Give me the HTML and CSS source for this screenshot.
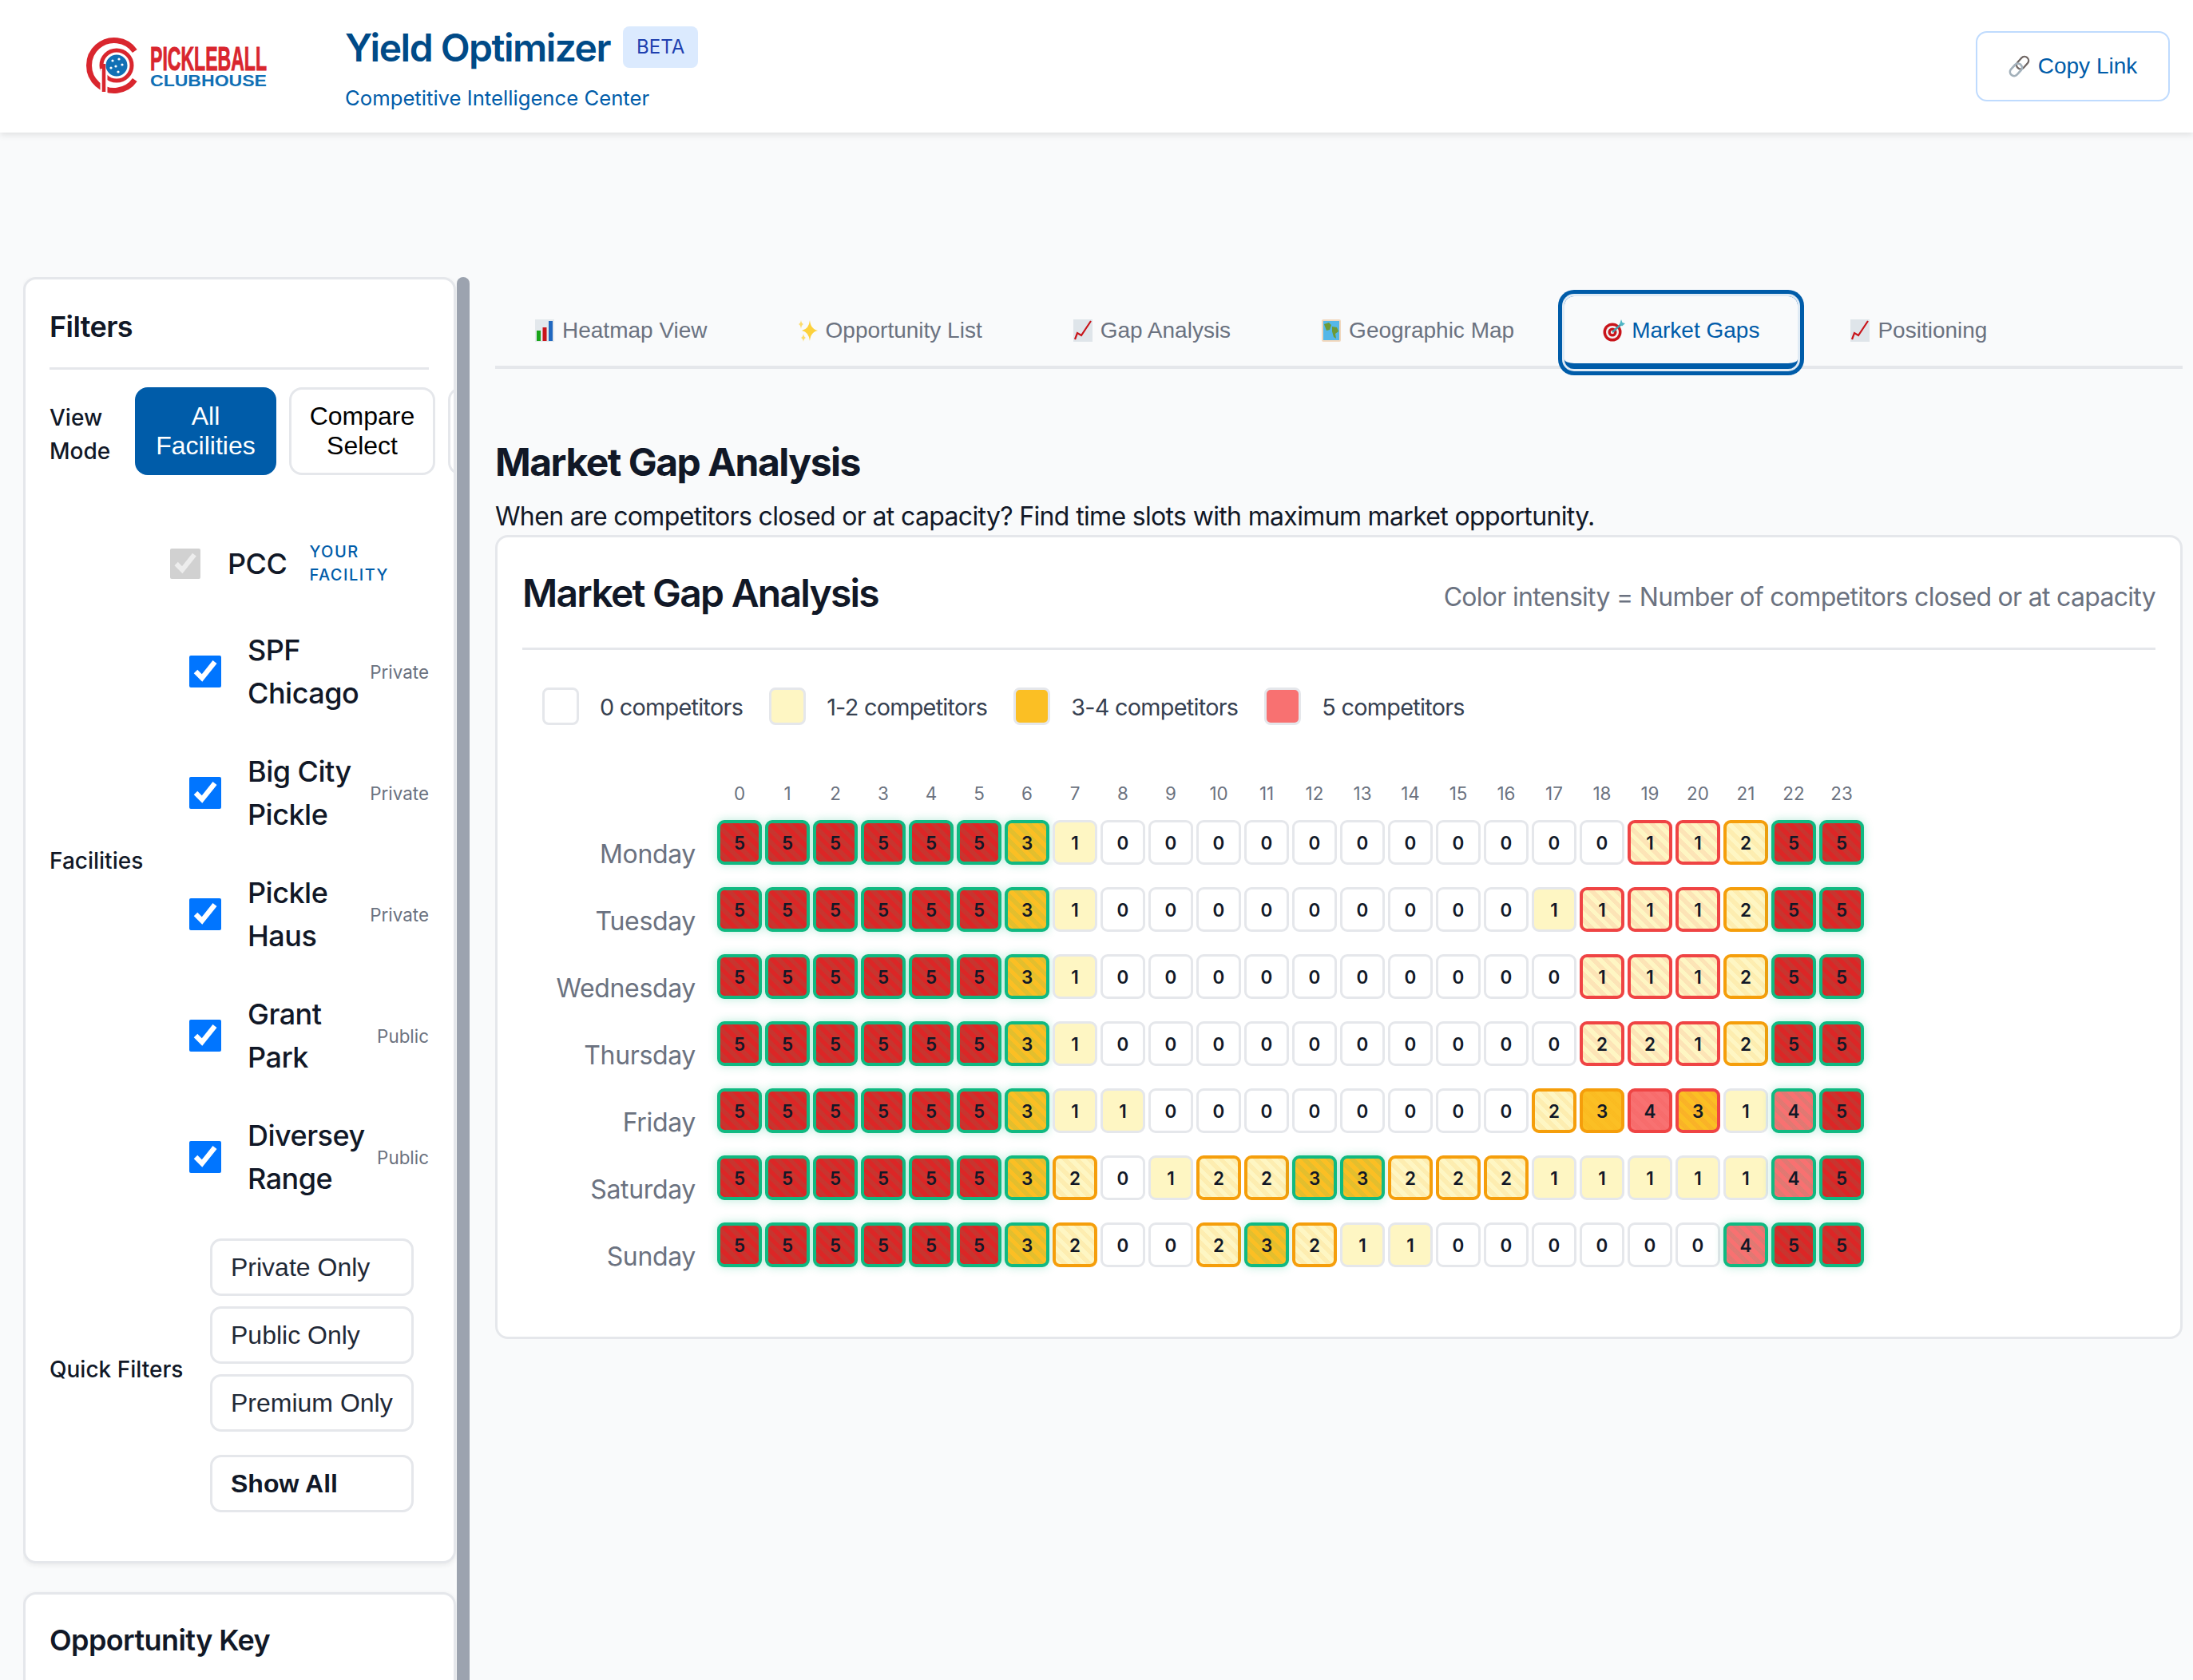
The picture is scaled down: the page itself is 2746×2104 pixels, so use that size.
FILE: index.html
```html
<!DOCTYPE html>
<html lang="en">
<head>
<meta charset="utf-8">
<title>Yield Optimizer</title>
<link rel="stylesheet" href="styles.css">
</head>
<body>
<header class="top">
  <svg class="logo" viewBox="0 0 270 100" width="270" height="100" aria-label="Pickleball Clubhouse">
    <g transform="translate(1 -3)">
      <path d="M77.8 33.9A31.5 31.5 0 1 0 77.8 70.1" fill="none" stroke="#d9262e" stroke-width="7"/>
      <circle cx="55" cy="52" r="19" fill="none" stroke="#d9262e" stroke-width="5"/>
      <path d="M39 56V90" stroke="#fff" stroke-width="9"/>
      <path d="M39 50V85" stroke="#d9262e" stroke-width="4.5"/>
      <circle cx="55" cy="52" r="13.5" fill="#1170b5"/>
      <g fill="#fff"><circle cx="50" cy="46" r="1.6"/><circle cx="58" cy="44" r="1.6"/><circle cx="62" cy="51" r="1.6"/><circle cx="54" cy="53" r="1.6"/><circle cx="48" cy="55" r="1.6"/><circle cx="57" cy="60" r="1.6"/></g>
    </g>
    <text class="logo-a" x="98" y="55" textLength="146" lengthAdjust="spacingAndGlyphs">PICKLEBALL</text>
    <text class="logo-b" x="98" y="75" textLength="146" lengthAdjust="spacingAndGlyphs">CLUBHOUSE</text>
  </svg>
  <div class="brand">
    <div class="brand-line">
      <h1 class="brand-title">Yield Optimizer</h1>
      <span class="beta">BETA</span>
    </div>
    <p class="brand-sub">Competitive Intelligence Center</p>
  </div>
  <button class="copy">
    <svg class="ico-link" viewBox="0 0 28 28" width="27" height="28"><g fill="none"><rect x="13" y="0.5" width="10.500" height="18" rx="5.200" transform="rotate(42 18.250 9.500)" stroke="#6f6663" stroke-width="2.400"/><rect x="4.500" y="9.500" width="10.500" height="18" rx="5.200" transform="rotate(42 9.750 18.500)" stroke="#a3b1bb" stroke-width="2.800"/></g></svg>
    Copy Link
  </button>
</header>

<div class="layout">
  <aside class="side">
    <span class="thumb"></span>
    <section class="card filters">
      <h2 class="card-title">Filters</h2>
      <div class="mode">
        <span class="lab mode-lab">View Mode</span>
        <button class="mode-btn on">All Facilities</button>
        <button class="mode-btn">Compare Select</button>
        <button class="mode-btn stub"></button>
      </div>
      <div class="fac">
        <span class="lab">Facilities</span>
        <div class="fac-list">
          <label class="row own"><input type="checkbox" checked disabled><span class="name">PCC</span><span class="own-tag">YOUR FACILITY</span></label>
          <label class="row"><input type="checkbox" checked><span class="name">SPF<br>Chicago</span><span class="tag">Private</span></label>
          <label class="row"><input type="checkbox" checked><span class="name">Big City<br>Pickle</span><span class="tag">Private</span></label>
          <label class="row"><input type="checkbox" checked><span class="name">Pickle<br>Haus</span><span class="tag">Private</span></label>
          <label class="row"><input type="checkbox" checked><span class="name">Grant<br>Park</span><span class="tag">Public</span></label>
          <label class="row"><input type="checkbox" checked><span class="name">Diversey<br>Range</span><span class="tag">Public</span></label>
        </div>
      </div>
      <div class="quick">
        <span class="lab">Quick Filters</span>
        <div class="quick-list">
          <button class="q">Private Only</button>
          <button class="q">Public Only</button>
          <button class="q">Premium Only</button>
          <button class="q all">Show All</button>
        </div>
      </div>
    </section>
    <section class="card key">
      <h2 class="card-title">Opportunity Key</h2>
    </section>
  </aside>

  <main class="main">
    <nav class="tabs">
      <button class="tab">
        <svg class="ico" viewBox="0 0 24 28" width="24" height="28"><rect x="0" y="0" width="24" height="28" fill="#e3e8ec"/><rect x="2" y="14" width="5" height="13" fill="#1aa51a"/><rect x="9.500" y="10" width="5" height="17" fill="#c8141a"/><rect x="17" y="2" width="5" height="25" fill="#2168c0"/></svg>
        Heatmap View</button>
      <button class="tab">
        <svg class="ico" viewBox="0 0 24 28" width="24" height="28"><path d="M14 1Q15 12 24 14 15 16 14 27 13 16 4 14 13 12 14 1Z" fill="#fcd13c"/><path d="M3 1Q3.500 5 6 6 3.500 7 3 12 2.500 7 0 6 2.500 5 3 1Z" fill="#fcdc6c"/><path d="M6 18Q6.500 22 9 23 6.500 24 6 28 5.500 24 3 23 5.500 22 6 18Z" fill="#fcdc6c"/></svg>
        Opportunity List</button>
      <button class="tab">
        <svg class="ico" viewBox="0 0 24 28" width="24" height="28"><rect x="0" y="0" width="24" height="28" fill="#dfe5ea"/><path d="M2 25l3-8 5 3L22 2" fill="none" stroke="#c8141a" stroke-width="2.200"/></svg>
        Gap Analysis</button>
      <button class="tab">
        <svg class="ico" viewBox="0 0 24 28" width="24" height="28"><rect x="0" y="0" width="24" height="28" rx="2" fill="#f1d7bd"/><rect x="2" y="2" width="20" height="24" fill="#55b7e8"/><path d="M3 6l6-2 3 3-2 6-4 1zM13 9l6 1 2 5-4 3 1 6-3-2-2-7z" fill="#6d9a35"/></svg>
        Geographic Map</button>
      <button class="tab active">
        <svg class="ico" viewBox="0 0 28 28" width="28" height="28"><circle cx="12" cy="16" r="11.500" fill="#c8141a"/><circle cx="12" cy="16" r="8" fill="#f3f3f3"/><circle cx="12" cy="16" r="5.500" fill="#c8141a"/><circle cx="12" cy="16" r="2.200" fill="#f3f3f3"/><path d="M12 16L24 5" stroke="#4c9aa8" stroke-width="2.500"/><path d="M21 6l2-6 1.500 4L28 5l-4 3.500z" fill="#4fb6c6"/></svg>
        Market Gaps</button>
      <button class="tab">
        <svg class="ico" viewBox="0 0 24 28" width="24" height="28"><rect x="0" y="0" width="24" height="28" fill="#dfe5ea"/><path d="M2 25l3-8 5 3L22 2" fill="none" stroke="#c8141a" stroke-width="2.200"/></svg>
        Positioning</button>
    </nav>

    <h2 class="page-title">Market Gap Analysis</h2>
    <p class="page-sub">When are competitors closed or at capacity? Find time slots with maximum market opportunity.</p>

    <section class="panel">
      <div class="panel-head">
        <h3 class="panel-title">Market Gap Analysis</h3>
        <span class="panel-note">Color intensity = Number of competitors closed or at capacity</span>
      </div>
      <div class="legend">
        <span class="sw s0"></span><span class="leg">0 competitors</span>
        <span class="sw s1"></span><span class="leg">1-2 competitors</span>
        <span class="sw s3"></span><span class="leg">3-4 competitors</span>
        <span class="sw s5"></span><span class="leg">5 competitors</span>
      </div>
      <div class="grid">
        <span></span>
        <span class="h">0</span><span class="h">1</span><span class="h">2</span><span class="h">3</span><span class="h">4</span><span class="h">5</span><span class="h">6</span><span class="h">7</span><span class="h">8</span><span class="h">9</span><span class="h">10</span><span class="h">11</span><span class="h">12</span><span class="h">13</span><span class="h">14</span><span class="h">15</span><span class="h">16</span><span class="h">17</span><span class="h">18</span><span class="h">19</span><span class="h">20</span><span class="h">21</span><span class="h">22</span><span class="h">23</span>

        <span class="day">Monday</span>
        <b class="c v5 g">5</b><b class="c v5 g">5</b><b class="c v5 g">5</b><b class="c v5 g">5</b><b class="c v5 g">5</b><b class="c v5 g">5</b><b class="c v3 g">3</b><b class="c v1">1</b><b class="c">0</b><b class="c">0</b><b class="c">0</b><b class="c">0</b><b class="c">0</b><b class="c">0</b><b class="c">0</b><b class="c">0</b><b class="c">0</b><b class="c">0</b><b class="c">0</b><b class="c v1 r">1</b><b class="c v1 r">1</b><b class="c v1 o">2</b><b class="c v5 g">5</b><b class="c v5 g">5</b>

        <span class="day">Tuesday</span>
        <b class="c v5 g">5</b><b class="c v5 g">5</b><b class="c v5 g">5</b><b class="c v5 g">5</b><b class="c v5 g">5</b><b class="c v5 g">5</b><b class="c v3 g">3</b><b class="c v1">1</b><b class="c">0</b><b class="c">0</b><b class="c">0</b><b class="c">0</b><b class="c">0</b><b class="c">0</b><b class="c">0</b><b class="c">0</b><b class="c">0</b><b class="c v1">1</b><b class="c v1 r">1</b><b class="c v1 r">1</b><b class="c v1 r">1</b><b class="c v1 o">2</b><b class="c v5 g">5</b><b class="c v5 g">5</b>

        <span class="day">Wednesday</span>
        <b class="c v5 g">5</b><b class="c v5 g">5</b><b class="c v5 g">5</b><b class="c v5 g">5</b><b class="c v5 g">5</b><b class="c v5 g">5</b><b class="c v3 g">3</b><b class="c v1">1</b><b class="c">0</b><b class="c">0</b><b class="c">0</b><b class="c">0</b><b class="c">0</b><b class="c">0</b><b class="c">0</b><b class="c">0</b><b class="c">0</b><b class="c">0</b><b class="c v1 r">1</b><b class="c v1 r">1</b><b class="c v1 r">1</b><b class="c v1 o">2</b><b class="c v5 g">5</b><b class="c v5 g">5</b>

        <span class="day">Thursday</span>
        <b class="c v5 g">5</b><b class="c v5 g">5</b><b class="c v5 g">5</b><b class="c v5 g">5</b><b class="c v5 g">5</b><b class="c v5 g">5</b><b class="c v3 g">3</b><b class="c v1">1</b><b class="c">0</b><b class="c">0</b><b class="c">0</b><b class="c">0</b><b class="c">0</b><b class="c">0</b><b class="c">0</b><b class="c">0</b><b class="c">0</b><b class="c">0</b><b class="c v1 r">2</b><b class="c v1 r">2</b><b class="c v1 r">1</b><b class="c v1 o">2</b><b class="c v5 g">5</b><b class="c v5 g">5</b>

        <span class="day">Friday</span>
        <b class="c v5 g">5</b><b class="c v5 g">5</b><b class="c v5 g">5</b><b class="c v5 g">5</b><b class="c v5 g">5</b><b class="c v5 g">5</b><b class="c v3 g">3</b><b class="c v1">1</b><b class="c v1">1</b><b class="c">0</b><b class="c">0</b><b class="c">0</b><b class="c">0</b><b class="c">0</b><b class="c">0</b><b class="c">0</b><b class="c">0</b><b class="c v1 o">2</b><b class="c v3 o">3</b><b class="c v4 r">4</b><b class="c v3 r">3</b><b class="c v1">1</b><b class="c v4 g">4</b><b class="c v5 g">5</b>

        <span class="day">Saturday</span>
        <b class="c v5 g">5</b><b class="c v5 g">5</b><b class="c v5 g">5</b><b class="c v5 g">5</b><b class="c v5 g">5</b><b class="c v5 g">5</b><b class="c v3 g">3</b><b class="c v1 o">2</b><b class="c">0</b><b class="c v1">1</b><b class="c v1 o">2</b><b class="c v1 o">2</b><b class="c v3 g">3</b><b class="c v3 g">3</b><b class="c v1 o">2</b><b class="c v1 o">2</b><b class="c v1 o">2</b><b class="c v1">1</b><b class="c v1">1</b><b class="c v1">1</b><b class="c v1">1</b><b class="c v1">1</b><b class="c v4 g">4</b><b class="c v5 g">5</b>

        <span class="day">Sunday</span>
        <b class="c v5 g">5</b><b class="c v5 g">5</b><b class="c v5 g">5</b><b class="c v5 g">5</b><b class="c v5 g">5</b><b class="c v5 g">5</b><b class="c v3 g">3</b><b class="c v1 o">2</b><b class="c">0</b><b class="c">0</b><b class="c v1 o">2</b><b class="c v3 g">3</b><b class="c v1 o">2</b><b class="c v1">1</b><b class="c v1">1</b><b class="c">0</b><b class="c">0</b><b class="c">0</b><b class="c">0</b><b class="c">0</b><b class="c">0</b><b class="c v4 g">4</b><b class="c v5 g">5</b><b class="c v5 g">5</b>
      </div>
    </section>
  </main>
</div>
</body>
</html>
```

FILE: styles.css
```css
* { box-sizing: border-box; }
html, body { margin: 0; height: 2104px; overflow: hidden; }
body { background: #f9fafb; font-family: Inter, "Liberation Sans", sans-serif; color: #111827; }
button { font-family: "Liberation Sans", Arial, sans-serif; cursor: pointer; margin: 0; }
h1, h2, h3, p { margin: 0; }

/* header */
.top { height: 166px; background: #fff; display: flex; align-items: center; padding: 0 29px 0 90px; box-shadow: 0 3px 8px rgba(0,0,0,.1); position: relative; }
.logo { flex: none; }
.logo-a { font: 700 42px "Liberation Sans", sans-serif; fill: #d9262e; stroke: #d9262e; stroke-width: 1px; }
.logo-b { font: 700 21px "Liberation Sans", sans-serif; fill: #1170b5; }
.brand { margin: 4px 0 0 72px; flex: 1; }
.brand-line { display: flex; align-items: center; gap: 16px; }
.brand-title { font-size: 48px; line-height: 52px; font-weight: 600; color: #004a87; letter-spacing: -1.500px; margin-top: 2px; }
.beta { background: #dbeafe; color: #1e40af; font-size: 24px; line-height: 52px; height: 52px; padding: 0 17px; border-radius: 8px; font-weight: 400; }
.brand-sub { font-size: 25.700px; line-height: 32px; color: #005ca9; margin-top: 21px; }
.copy { width: 243px; height: 88px; background: #fff; border: 2px solid #bfdbfe; border-radius: 14px; color: #005ca9; font-size: 28px; display: flex; align-items: center; justify-content: center; gap: 10px; padding: 0 0 1px; }

/* layout */
.layout { display: flex; padding: 181px 0 0 29px; align-items: flex-start; }
.side { position: relative; width: 559px; height: 1757px; overflow: hidden; flex: none; }
.thumb { position: absolute; right: 0; top: 0; width: 16px; height: 1900px; background: #9ca3af; border-radius: 8px; }
.card { width: 542px; background: #fff; border: 3px solid #e5e7eb; border-radius: 16px; box-shadow: 0 2px 6px rgba(0,0,0,.07); padding: 32px 30px; overflow: hidden; }
.card-title { font-size: 36px; line-height: 54px; font-weight: 600; letter-spacing: -.6px; }
.filters { height: 1611px; margin-bottom: 36px; }
.key { height: 400px; padding-top: 30px; }
.filters .card-title { padding-bottom: 24px; border-bottom: 3px solid #e5e7eb; width: 475px; }

.lab { font-size: 28px; line-height: 42px; font-weight: 500; color: #111827; flex: none; }
.mode { display: flex; align-items: center; gap: 16px; margin-top: 22px; width: 700px; }
.mode-lab { width: 91px; margin-top: 7px; }
.mode-btn { width: 183px; height: 110px; flex: none; background: #fff; border: 3px solid #e5e7eb; border-radius: 16px; font-size: 32px; line-height: 37px; color: #000; padding: 0 20px; }
.mode-btn.on { width: 177px; background: #005ca9; border-color: #005ca9; color: #fff; }

.fac { display: flex; align-items: center; margin-top: 52px; }
.fac .lab { width: 151px; margin-top: -16px; }
.fac-list { display: flex; flex-direction: column; width: 324px; }
.row { display: flex; align-items: center; height: 152px; padding-left: 24px; }
.row input { width: 40px; height: 40px; margin: 0; flex: none; }
.row.own { height: 118px; padding-left: 0; }
.row.own input { width: 38px; height: 38px; }
.name { font-size: 36px; line-height: 54px; font-weight: 500; color: #111827; margin-left: 33px; flex: 1; letter-spacing: -.5px; }
.own .name { flex: none; margin-right: 28px; margin-left: 34px; }
.own-tag { font-size: 20px; line-height: 29px; letter-spacing: 1.500px; font-weight: 500; color: #005ca9; width: 110px; }
.tag { font-size: 22.400px; color: #6b7280; }

.quick { display: flex; align-items: center; margin-top: 26px; }
.quick .lab { width: 201px; margin-top: -16px; }
.quick-list { display: flex; flex-direction: column; gap: 13px; width: 255px; }
.q { height: 72px; background: #fff; border: 3px solid #e5e7eb; border-radius: 14px; font-size: 32px; text-align: left; padding: 0 23px; color: #1f2937; white-space: nowrap; }
.q.all { font-weight: 700; margin-top: 16px; color: #111827; }

/* main */
.main { width: 2113px; margin: 24px 0 0 32px; flex: none; }
.tabs { display: flex; gap: 14px; border-bottom: 4px solid #e5e7eb; height: 91px; }
.tab { height: 91px; background: transparent; border: 0; padding: 0 50px 6px; font-size: 28px; color: #6b7280; display: flex; align-items: center; gap: 10px; white-space: nowrap; }
.tab.active { color: #005ca9; gap: 8px; margin: 0 2px 0 -1px; padding: 7px 48px 6px; border-bottom: 7px solid #005ca9; border-radius: 12px; box-shadow: 0 0 0 3px #e0ebf5, 0 0 0 8px #005ca9; }
.ico { flex: none; }

.page-title { font-size: 48px; line-height: 72px; font-weight: 700; letter-spacing: -1.500px; margin-top: 81px; color: #111827; }
.page-sub { font-size: 32px; line-height: 48px; letter-spacing: -.66px; margin-top: 8px; color: #111827; }

.panel { background: #fff; border: 3px solid #e5e7eb; border-radius: 16px; height: 1007px; margin-top: -1px; padding: 0 31px; }
.panel-head { display: flex; justify-content: space-between; align-items: center; height: 141px; border-bottom: 3px solid #e5e7eb; }
.panel-title { font-size: 48px; font-weight: 600; letter-spacing: -1.750px; color: #111827; }
.panel-note { font-size: 32px; letter-spacing: -.7px; color: #6b7280; margin-top: 10px; }
.legend { display: flex; align-items: center; padding: 47px 0 0 25px; }
.sw { width: 46px; height: 47px; border: 3px solid #e5e7eb; border-radius: 8px; flex: none; }
.s0 { background: #fff; }
.s1 { background: #fef6c3; }
.s3 { background: #fbbf24; }
.s5 { background: #f87171; }
.leg { font-size: 28.800px; letter-spacing: -.72px; color: #374151; margin: 2px 33px 0 26px; }
.grid { display: grid; grid-template-columns: 240px repeat(24, 56px); column-gap: 4px; row-gap: 28px; margin-top: 70px; align-items: center; }
.h { font-size: 22.400px; line-height: 32px; color: #6b7280; text-align: center; margin-bottom: -11px; }
.day { font-size: 32px; line-height: 48px; letter-spacing: -.35px; color: #6b7280; text-align: right; padding-right: 23px; align-self: end; margin-bottom: -11px; }
.c { height: 56px; border: 3px solid #e5e7eb; border-radius: 9px; background-color: #fff; font-size: 22.400px; font-weight: 600; color: #111827; display: flex; align-items: center; justify-content: center; }
.v1 { background-color: #fef6c3; }
.v3 { background-color: #fbbf24; }
.v4 { background-color: #f87171; }
.v5 { background-color: #dc2626; }
.g { border: 4px solid #10b981; box-shadow: 0 0 12px rgba(16,185,129,.3); background-image: repeating-linear-gradient(45deg, transparent, transparent 5.500px, rgba(16,185,129,.1) 5.500px, rgba(16,185,129,.1) 11px); }
.r { border: 4px solid #ef4444; background-image: repeating-linear-gradient(45deg, transparent, transparent 5.500px, rgba(239,68,68,.1) 5.500px, rgba(239,68,68,.1) 11px); }
.o { border: 4px solid #f59e0b; background-image: repeating-linear-gradient(45deg, transparent, transparent 5.500px, rgba(245,158,11,.1) 5.500px, rgba(245,158,11,.1) 11px); }
```
